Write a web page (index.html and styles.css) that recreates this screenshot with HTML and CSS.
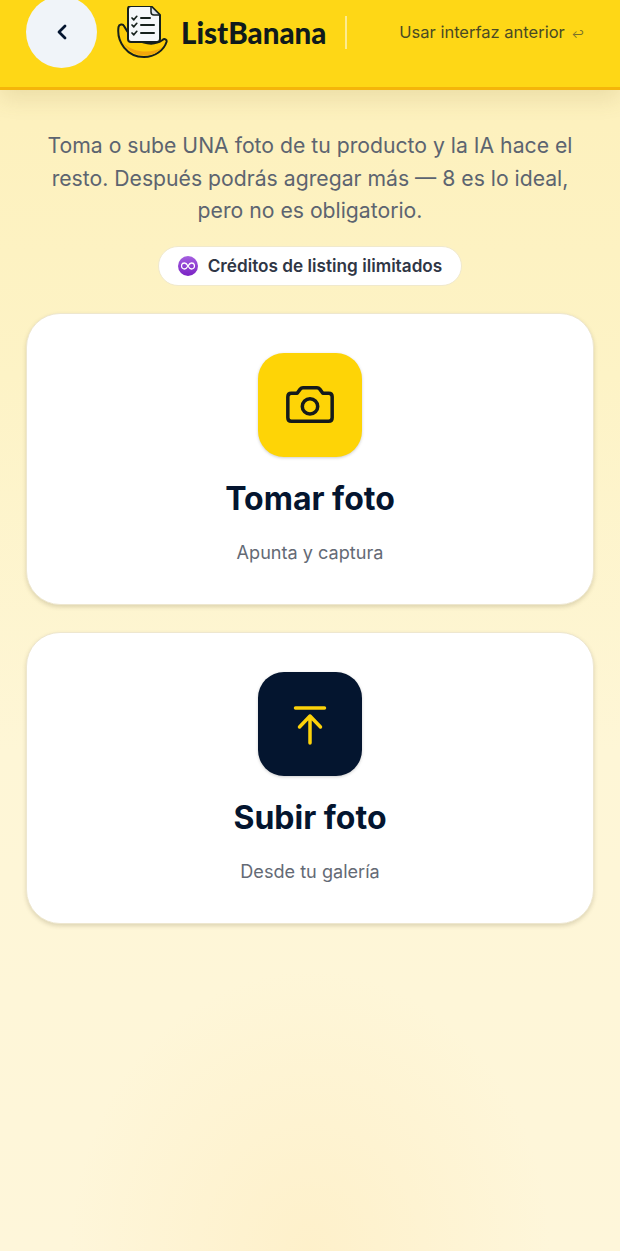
FILE: index.html

```html
<!DOCTYPE html>
<html lang="es">
<head>
    <meta charset="UTF-8">
    <meta name="viewport" content="width=device-width, initial-scale=1.0">
    <title>ListBanana</title>
    <link rel="stylesheet" href="styles.css">
</head>
<body>
    <header class="topbar">
        <button class="back-btn" aria-label="Volver">
            <svg width="24" height="24" viewBox="0 0 24 24" fill="none" stroke="#04152f" stroke-width="2.800" stroke-linecap="round" stroke-linejoin="round"><path d="M15 6l-6 6 6 6"/></svg>
        </button>
        <div class="brand">
            <svg class="brand-logo" width="52" height="52" viewBox="0 0 52 52" fill="none">
                <path d="M1.500 21C-.5 36 10 51 27 51c11 0 20-7 22.500-15 .7-2.500-2-4-4-2C36 41 16 38 7 20c-1-2.500-5-2-5.500 1z" fill="#fdcd08" stroke="#16201c" stroke-width="2" stroke-linejoin="round"/>
                <path d="M6 37c6 8 12 12.500 21 12.500 8 0 14-3 18-8-10 6-28 6-39-4.500z" fill="#f2a70c"/>
                <path d="M11 3c0-2 1-3 3-3h20l9 9v24c0 2-1 3-3 3H14c-2 0-3-1-3-3z" fill="#f5f7fa" stroke="#16201c" stroke-width="2" stroke-linejoin="round"/>
                <path d="M34 1v5c0 2 1 3 3 3h5" fill="#dfe4ea" stroke="#16201c" stroke-width="1.500" stroke-linejoin="round"/>
                <path d="M15 12l1.800 1.800 3-3.500M15 19l1.800 1.800 3-3.500M15 27l1.800 1.800 3-3.500" stroke="#16201c" stroke-width="1.700" stroke-linecap="round" stroke-linejoin="round"/>
                <path d="M24 12h9M24 19h13M24 27h13" stroke="#16201c" stroke-width="2" stroke-linecap="round"/>
            </svg>
            <span class="brand-name">ListBanana</span>
        </div>
        <span class="divider"></span>
        <a class="old-ui" href="#">Usar interfaz anterior <span class="old-ui-arrow">↩</span></a>
    </header>

    <main class="content">
        <p class="intro">Toma o sube UNA foto de tu producto y la IA hace el resto. Después podrás agregar más — 8 es lo ideal, pero no es obligatorio.</p>

        <div class="credits">
            <span class="credits-icon">
                <svg width="14" height="8" viewBox="0 0 14 8" fill="none" stroke="#fff" stroke-width="1.300"><path d="M7 4C6 2.200 5 1 3.500 1a3 3 0 0 0 0 6C5 7 6 5.800 7 4c1-1.800 2-3 3.500-3a3 3 0 0 1 0 6C9 7 8 5.800 7 4z"/></svg>
            </span>
            Créditos de listing ilimitados
        </div>

        <button class="option">
            <span class="option-icon yellow">
                <svg width="56" height="56" viewBox="0 0 24 24" fill="none" stroke="#141a1c" stroke-width="1.500" stroke-linecap="round" stroke-linejoin="round"><path d="M4 7h2.500l1.300-1.800c.3-.4.7-.6 1.200-.6h6c.5 0 .9.2 1.200.6L17.500 7H20c.9 0 1.500.6 1.500 1.500v9c0 .9-.6 1.500-1.500 1.500H4c-.9 0-1.500-.6-1.500-1.500v-9C2.500 7.600 3.100 7 4 7z"/><circle cx="12" cy="12.600" r="3.300"/></svg>
            </span>
            <span class="option-title">Tomar foto</span>
            <span class="option-sub">Apunta y captura</span>
        </button>

        <button class="option">
            <span class="option-icon navy">
                <svg width="48" height="48" viewBox="0 0 48 48" fill="none" stroke="#fdd20a" stroke-width="3.500" stroke-linecap="round" stroke-linejoin="round"><path d="M9.500 8h29M24 43V16M13.500 27L24 16l10.500 11"/></svg>
            </span>
            <span class="option-title">Subir foto</span>
            <span class="option-sub">Desde tu galería</span>
        </button>
    </main>
</body>
</html>
```

FILE: styles.css

```css
html, body {
    margin: 0;
    padding: 0;
}

body {
    min-height: 1251px;
    background:
        radial-gradient(ellipse 240px 280px at 50% 100%, rgba(254, 238, 196, 0.7), rgba(254, 238, 196, 0)),
        linear-gradient(180deg, #fdf0ba 0%, #fdf3c6 30%, #fef6d6 60%, #fef6da 100%);
    font-family: 'Inter', 'Liberation Sans', sans-serif;
    color: #04152f;
}

.topbar {
    height: 87px;
    display: flex;
    align-items: center;
    padding: 0 36px 0 26px;
    background: #fed716;
    border-bottom: 3px solid #f5b50a;
    box-shadow: 0 8px 22px rgba(120, 100, 30, 0.14);
    overflow: hidden;
}

.back-btn {
    flex: none;
    width: 71px;
    height: 72px;
    margin-top: -23px;
    border: 0;
    border-radius: 50%;
    background: #f0f4f9;
    display: flex;
    align-items: center;
    justify-content: center;
    padding: 0;
}

.brand {
    display: flex;
    align-items: center;
    margin-left: 20px;
    margin-top: -23px;
}

.brand-logo {
    flex: none;
}

.brand-name {
    margin-left: 12px;
    font-family: 'Lato', 'Liberation Sans', sans-serif;
    font-weight: 900;
    font-size: 29.500px;
    color: #0f1a1c;
}

.divider {
    flex: none;
    width: 2px;
    height: 33px;
    margin: -23px 0 0 19px;
    background: #fdeb8f;
}

.old-ui {
    margin: -23px 0 0 auto;
    font-size: 16.500px;
    color: #4a4a24;
    text-decoration: none;
    white-space: nowrap;
}

.old-ui-arrow {
    font-size: 11px;
    margin-left: 2px;
    color: #77702a;
}

.content {
    display: flex;
    flex-direction: column;
    align-items: center;
    padding: 0 26px;
}

.intro {
    margin: 39px 0 0;
    width: 540px;
    font-size: 21.200px;
    line-height: 32.500px;
    text-align: center;
    color: #5c6470;
}

.credits {
    display: flex;
    align-items: center;
    gap: 10px;
    height: 38px;
    margin-top: 19px;
    padding: 0 19px;
    background: #fff;
    border: 1px solid #f0e9cd;
    border-radius: 20px;
    font-size: 17.200px;
    font-weight: 600;
    color: #2f3645;
}

.credits-icon {
    width: 20px;
    height: 20px;
    border-radius: 50%;
    background: linear-gradient(180deg, #a560e0, #7a22c4);
    display: flex;
    align-items: center;
    justify-content: center;
}

.option {
    width: 100%;
    height: 292px;
    margin-top: 27px;
    padding: 39px 0 0;
    box-sizing: border-box;
    display: flex;
    flex-direction: column;
    align-items: center;
    background: #fff;
    border: 1px solid #eee7cf;
    border-radius: 34px;
    box-shadow: 0 2px 4px rgba(90, 80, 40, 0.2);
    font-family: inherit;
}

.option-icon {
    width: 104px;
    height: 104px;
    border-radius: 26px;
    display: flex;
    align-items: center;
    justify-content: center;
    box-shadow: 0 1px 3px rgba(60, 60, 60, 0.25);
}

.option-icon.yellow {
    background: #fed406;
}

.option-icon.navy {
    background: #04152f;
}

.option-title {
    margin-top: 22px;
    font-size: 32px;
    line-height: 40px;
    font-weight: 700;
    color: #04152f;
}

.option-sub {
    margin-top: 21px;
    font-size: 18.100px;
    line-height: 24px;
    color: #646a75;
}
```
